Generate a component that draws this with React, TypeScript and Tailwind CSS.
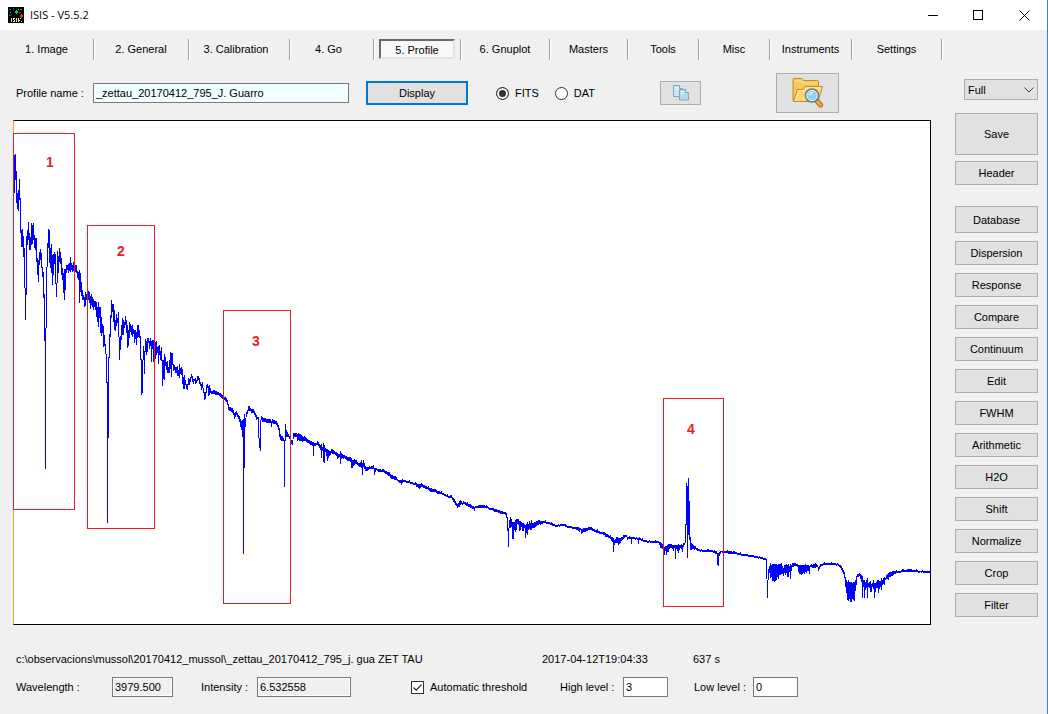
import { useState } from 'react'
import type { ReactNode } from 'react'

const TABS = [
  { label: '1. Image', cls: 'w-[94px] px-1.5' },
  { label: '2. General', cls: 'w-[95px] px-1.5' },
  { label: '3. Calibration', cls: 'w-[101px] pl-1 pr-2.5' },
  { label: '4. Go', cls: 'w-[84px] pl-1 pr-2.5' },
  { label: '5. Profile', cls: 'w-[87px] px-[5px]' },
  { label: '6. Gnuplot', cls: 'w-[89px] px-[5px]' },
  { label: 'Masters', cls: 'w-[78px] px-1.5' },
  { label: 'Tools', cls: 'w-[71px] px-1.5' },
  { label: 'Misc', cls: 'w-[71px] px-1.5' },
  { label: 'Instruments', cls: 'w-[82px] px-1.5' },
  { label: 'Settings', cls: 'w-[90px] px-1.5' },
]

const TOOLS = [
  'Dispersion', 'Response', 'Compare', 'Continuum', 'Edit', 'FWHM',
  'Arithmetic', 'H2O', 'Shift', 'Normalize', 'Crop', 'Filter',
]

// spectrum samples: column, top, bottom
const SPECTRUM = `
14,155,193 15,154,180 16,171,203 17,193,209 18,190,211 19,179,200 20,198,233 21,230,247 22,229,247 23,236,257
24,248,288 25,288,320 26,236,295 27,230,245 28,222,240 29,233,250 30,237,250 31,223,245 32,225,244 33,223,240
34,235,248 35,238,250 36,238,262 37,258,275 38,260,282 39,252,265 40,249,260 41,253,268 42,267,277 43,272,298
44,294,341 45,328,469 46,267,328 47,243,267 48,229,248 49,230,263 50,248,268 51,244,273 52,255,285 53,254,275
54,252,264 55,254,284 56,283,297 57,251,283 58,256,273 59,248,262 60,252,264 61,258,275 62,268,280 63,273,293
64,269,300 65,269,290 66,265,273 67,265,270 68,264,273 69,263,271 70,257,272 71,263,270 72,265,272 73,262,271
74,264,270 75,265,272 76,265,273 77,271,278 78,272,280 79,270,303 80,273,292 81,282,296 82,290,300 83,295,300
84,297,307 85,292,306 86,294,300 87,290,296 88,291,300 89,292,303 90,296,309 91,294,305 92,297,307 93,299,310
94,301,307 95,301,310 96,302,317 97,307,322 98,302,327 99,307,318 100,307,333 101,317,336 102,324,333 103,326,347
104,335,346 105,344,354 106,354,383 107,382,523 108,357,438 109,334,358 110,315,337 111,300,318 112,304,312
113,304,322 114,310,330 115,320,331 116,314,326 117,318,323 118,312,337 119,337,360 120,336,350 121,325,340
122,318,335 123,320,335 124,322,328 125,316,325 126,320,333 127,325,348 128,330,346 129,322,338 130,324,332
131,326,335 132,325,337 133,329,334 134,330,343 135,330,339 136,332,345 137,325,338 138,325,337 139,330,338
140,336,360 141,359,395 142,360,393 143,346,360 144,351,374 145,339,352 146,341,355 147,338,352 148,338,343
149,341,349 150,338,346 151,341,362 152,340,349 153,340,362 154,342,346 155,342,359 156,341,355 157,347,353
158,346,364 159,345,355 160,351,360 161,347,361 162,360,386 163,360,379 164,354,380 165,357,366 166,362,370
167,361,373 168,367,373 169,360,373 170,352,369 171,353,377 172,353,365 173,364,371 174,365,370 175,367,373
176,367,373 177,366,376 178,370,376 179,364,378 180,368,374 181,367,375 182,369,384 183,377,389 184,375,389
185,380,385 186,384,389 187,384,390 188,378,385 189,379,385 190,377,382 191,374,378 192,376,382 193,379,384
194,379,381 195,378,384 196,380,383 197,376,381 198,376,380 199,378,384 200,382,386 201,384,390 202,382,388
203,388,393 204,392,400 205,392,399 206,385,393 207,384,388 208,386,396 209,385,395 210,388,393 211,391,394
216,391,395 220,393,397 223,396,400 226,398,402 228,404,410 229,407,411 232,408,413 234,413,419 236,411,415
238,415,419 240,419,427 241,421,430 242,420,437 243,419,554 244,414,468 245,418,427 246,412,417 247,410,414
248,406,411 249,406,411 251,409,413 254,411,415 256,415,420 257,417,419 258,417,438 259,438,448 260,420,451
261,416,420 262,417,422 266,419,423 270,419,423 271,421,427 272,419,423 276,421,425 278,425,430 279,428,437
280,434,440 281,436,441 282,436,441 283,438,441 284,440,487 285,424,441 286,430,437 288,434,437 290,437,443
291,440,444 292,440,445 293,433,439 294,433,437 296,433,437 297,434,441 300,434,441 302,436,442 306,438,442
310,441,445 312,442,446 313,442,456 314,443,446 318,442,446 320,445,450 321,444,458 322,447,451 323,443,462
324,445,463 325,448,452 327,449,461 328,450,458 330,451,455 332,449,454 334,451,454 337,453,459 339,454,457
340,451,464 341,453,459 343,455,459 344,455,458 347,457,461 350,457,462 351,458,468 352,460,468 354,459,465
357,462,465 359,463,467 361,460,468 362,463,475 363,460,467 365,466,471 367,467,471 370,467,469 373,465,469
374,468,475 376,468,470 378,469,472 384,470,473 388,472,476 391,475,479 394,476,480 398,480,482 401,480,485
403,480,482 408,481,483 414,483,485 419,484,489 422,484,487 430,488,492 438,491,494 443,493,495 448,496,498
451,495,498 453,498,502 455,501,505 457,504,508 459,501,507 460,500,505 462,503,505 463,501,504 466,503,506
470,504,508 472,506,509 474,507,511 475,506,508 480,505,508 484,505,508 490,508,510 495,509,512 500,511,514
505,512,515 506,513,518 507,517,531 508,528,547 509,520,528 510,517,528 511,519,527 512,522,539 513,522,539
514,522,530 515,520,532 516,519,530 517,519,524 518,519,525 519,521,531 520,521,530 521,522,527 522,523,531
523,523,531 524,524,528 525,525,538 526,524,533 527,522,535 528,524,530 529,521,529 530,523,530 531,520,530
532,523,528 534,522,528 536,521,526 540,521,525 544,521,523 548,522,524 552,523,526 556,525,527 562,524,526
568,526,528 574,527,529 579,528,532 580,528,530 581,529,534 584,528,532 590,527,530 596,530,533 601,532,534
605,533,537 608,535,538 612,537,542 613,538,552 614,540,545 616,537,543 618,538,545 620,538,543 624,535,538
626,535,537 627,537,540 630,537,539 631,537,544 632,537,539 637,538,540 638,538,544 639,537,540 643,540,542
650,541,543 656,541,543 658,541,543 660,542,548 662,544,549 664,547,555 665,546,551 666,546,555 668,544,552
669,544,549 671,544,548 673,545,551 674,545,548 675,545,559 676,545,549 678,544,553 680,545,548 682,545,552
683,543,547 684,543,545 685,524,543 686,483,525 687,486,558 688,478,535 689,501,540 690,537,550 691,543,550
694,546,550 698,549,551 702,550,552 710,550,552 716,551,554 717,553,565 718,553,566 719,552,556 721,551,552
728,551,554 735,552,554 742,554,556 750,555,557 760,557,559 765,558,560 766,559,579 767,580,598 768,569,580
769,566,573 770,563,578 771,565,577 772,564,581 773,564,581 774,564,582 775,564,581 776,564,580 777,565,577
778,564,579 779,564,575 781,563,574 783,568,576 784,565,573 785,565,575 787,565,577 788,564,577 789,566,572
790,564,579 791,565,571 792,563,567 795,563,566 797,564,567 798,565,572 799,565,574 801,565,575 804,565,574
808,565,571 809,566,574 810,565,567 812,565,568 815,563,568 817,565,567 818,567,571 820,564,567 825,563,565
833,563,565 838,564,566 841,566,570 844,572,578 845,577,587 846,580,593 847,582,600 848,580,601 849,582,599
850,582,602 851,582,602 852,583,599 853,582,600 854,582,601 855,580,591 856,576,585 857,574,577 859,573,576
861,575,582 862,576,598 863,580,587 864,580,598 865,582,590 866,580,588 867,578,598 868,583,587 870,581,592
871,584,592 872,583,587 873,580,589 874,583,598 875,583,592 876,582,588 878,580,593 880,581,587 881,578,590
882,580,585 884,577,585 885,578,580 886,575,579 888,573,580 890,572,577 892,571,576 897,571,573 904,570,572
909,569,572 915,570,572 920,571,572 925,571,573 930,572,574`

// fills the columns between two samples, so that dense bands keep their ragged look
function buildTrace(src: string) {
  const pts = src.trim().split(/\s+/).map((s) => s.split(',').map(Number))
  let d = ''
  for (let i = 0; i < pts.length; i++) {
    const [x0, t0, b0] = pts[i]
    d += `M${x0} ${t0}h1V${b0}h-1z`
    if (i === pts.length - 1) break
    const [x1, t1, b1] = pts[i + 1]
    for (let x = x0 + 1; x < x1; x++) {
      const k = (x - x0) / (x1 - x0)
      const n = ((x * 7919) % 13) / 13
      const top = t0 + (t1 - t0) * k
      const bottom = b0 + (b1 - b0) * k
      const t = Math.round(top + (n > 0.7 ? -1 : 0))
      const b = Math.max(t + 2, Math.round(bottom - (bottom - top) * 0.25 * n))
      d += `M${x} ${t}h1V${b}h-1z`
    }
  }
  return d
}

const TRACE = buildTrace(SPECTRUM)

const REGIONS = [
  { n: 1, x: 13, y: 133, w: 61, h: 376, tx: 50, ty: 167 },
  { n: 2, x: 87, y: 225, w: 67, h: 303, tx: 121, ty: 256 },
  { n: 3, x: 223, y: 310, w: 67, h: 293, tx: 256, ty: 346 },
  { n: 4, x: 663, y: 398, w: 60, h: 208, tx: 691, ty: 434 },
]

function AppIcon() {
  return (
    <svg width="16" height="16" viewBox="0 0 16 16" shapeRendering="crispEdges" aria-hidden="true">
      <rect width="16" height="16" fill="#000" />
      <path d="M1 2h2v1H1zM5 1h1v2H5zM11 5h2v1h-2zM3 7h1v1H3zM1 8h2v1H1z" fill="#1f4fd0" />
      <path d="M7 4h3v2H7zM8 3h1v4H8zM12 2h2v1h-2z" fill="#10d040" />
      <path d="M12 8h3v2h-3zM13 7h1v4h-1z" fill="#f03018" />
      <path d="M2 5h1v1H2zM10 2h1v1h-1z" fill="#e8a020" />
      <path d="M3 11h1v4H3zM5 11h2v1H5zM5 12h1v1H5zM6 13h1v1H6zM5 14h2v1H5zM8 11h1v4H8zM10 11h1v4h-1zM12 11h1v1h-1zM11 13h1v1h-1zM13 14h1v1h-1z" fill="#e8e4b0" />
    </svg>
  )
}

function CopyIcon() {
  return (
    <svg width="18" height="18" viewBox="0 0 18 18" aria-hidden="true">
      <g stroke="#7aa9c4" strokeWidth="1">
        <path d="M1.5 1.5h6l2.500 2.500v8.500h-8.500z" fill="#c9e6f2" />
        <path d="M7.500 1.500v3h3" fill="#f2fbff" />
        <path d="M7.500 5.500h6l3 3v7.500h-9z" fill="#b4dbea" />
        <path d="M13.500 5.500v3h3" fill="#f2fbff" />
      </g>
      <path d="M3 3.500h3M3 5.500h3M9 7.500h3M9 9.500h3" stroke="#eefaff" />
    </svg>
  )
}

function FolderSearchIcon() {
  return (
    <svg width="32" height="32" viewBox="0 0 32 32" aria-hidden="true">
      <path d="M1 24V2.500q0-1 1-1h8l1.500 2h14q1 0 1 1V24z" fill="#f5c65a" stroke="#c9882a" />
      <path d="M2.500 4h7l1.500 2H25" fill="none" stroke="#fde6a0" />
      <path d="M1.500 24.500 5.500 12.500h5.500l2-3h17.500l-4.500 15z" fill="#fbd878" stroke="#c9882a" />
      <path d="M3.500 23l3.500-9.500h5l2-2.500H29" fill="none" stroke="#fff0bc" />
      <path d="M25 24l3.500 4" stroke="#b06a10" strokeWidth="5" strokeLinecap="round" />
      <path d="M25.500 24.500l3 3.500" stroke="#f5a93a" strokeWidth="3" strokeLinecap="round" />
      <circle cx="20" cy="18.500" r="6.500" fill="#8fd0f5" stroke="#687888" strokeWidth="1.500" />
      <circle cx="20" cy="18.500" r="5.200" fill="none" stroke="#e4f3fc" />
      <path d="M16.500 18.500a4 4 0 0 1 5-3.500c-1 2-2.500 3.500-5 3.500z" fill="#d6f0ff" />
    </svg>
  )
}

function PushButton({ className, label, children }: { className: string; label?: string; children: ReactNode }) {
  return (
    <button
      type="button"
      aria-label={label}
      className={`flex shrink-0 items-center justify-center bg-[#e1e1e1] ${className}`}
    >
      {children}
    </button>
  )
}

function Field({ label, labelCls, value, inputCls }: { label: string; labelCls: string; value: string; inputCls: string }) {
  return (
    <label className="flex shrink-0 items-center">
      <span className={`whitespace-nowrap ${labelCls}`}>{label}</span>
      <input type="text" defaultValue={value} className={`h-5 border border-[#7a7a7a] px-0.5 outline-none ${inputCls}`} />
    </label>
  )
}

function FormatRadio({ label, checked, onPick }: { label: string; checked: boolean; onPick: () => void }) {
  return (
    <label className="flex items-center gap-1.5">
      <input
        type="radio"
        name="format"
        checked={checked}
        onChange={onPick}
        className="size-[13px] appearance-none rounded-full border border-[#333] bg-white checked:bg-[#333] checked:shadow-[inset_0_0_0_2px_#fff]"
      />
      {label}
    </label>
  )
}

function SpectrumChart() {
  return (
    <div className="mt-[7px] border border-black border-l-[#e8a820] bg-white">
      <svg viewBox="14 121 916 503" className="block w-full overflow-visible" role="img" aria-label="Spectrum">
        <path d={TRACE} fill="#0000ff" shapeRendering="crispEdges" />
        {REGIONS.map((r) => (
          <g key={r.n}>
            <rect x={r.x + 0.5} y={r.y + 0.5} width={r.w} height={r.h} fill="none" stroke="#ed1c24" shapeRendering="crispEdges" />
            <text x={r.tx} y={r.ty} textAnchor="middle" className="fill-[#ed1c24] font-['Liberation_Sans',sans-serif] text-[14px] font-bold">
              {r.n}
            </text>
          </g>
        ))}
      </svg>
    </div>
  )
}

export default function App() {
  const [tab, setTab] = useState('5. Profile')
  const [format, setFormat] = useState('FITS')
  const [auto, setAuto] = useState(true)

  return (
    <div className="min-h-screen border-r border-[#3c82c8] bg-[#f0f0f0] font-['Liberation_Sans',Arial,sans-serif] text-[11px] leading-4 text-black">
      <header className="flex h-[30px] items-center bg-white pl-2">
        <AppIcon />
        <h1 className="ml-1.5 flex-1 font-['Open_Sans',sans-serif] text-[11px]">ISIS - V5.5.2</h1>
        <button type="button" aria-label="Minimize" className="flex h-full w-[45px] items-center justify-center">
          <svg width="11" height="11" stroke="#000" shapeRendering="crispEdges"><path d="M0 5.500h10" /></svg>
        </button>
        <button type="button" aria-label="Maximize" className="flex h-full w-[45px] items-center justify-center">
          <svg width="11" height="11" stroke="#000" fill="none" shapeRendering="crispEdges"><path d="M.5.5h9v9h-9z" /></svg>
        </button>
        <button type="button" aria-label="Close" className="flex h-full w-[46px] items-center justify-center">
          <svg width="11" height="11" stroke="#000"><path d="M.5.5l10 10M10.500.5l-10 10" /></svg>
        </button>
      </header>

      <nav className="flex pt-[9px]">
        {TABS.map((t) => (
          <div key={t.label} className={`h-[21px] shrink-0 border-r border-[#a0a0a0] shadow-[1px_0_0_#fff] ${t.cls}`}>
            <button
              type="button"
              onClick={() => setTab(t.label)}
              className={
                tab === t.label
                  ? 'h-5 w-full border-2 border-[#e3e3e3] border-t-[#696969] border-l-[#696969] bg-[#f8f8f8] pt-px leading-4'
                  : 'h-5 w-full whitespace-nowrap'
              }
            >
              {t.label}
            </button>
          </div>
        ))}
      </nav>

      <div className="flex gap-6 pt-[13px] pr-[9px] pl-[13px]">
        <main className="min-w-0 flex-1">
          <div className="flex h-10 items-center">
            <Field label="Profile name :" labelCls="w-20 pl-[3px]" value="_zettau_20170412_795_J. Guarro" inputCls="w-64 bg-[#f0ffff]" />
            <PushButton className="ml-[17px] h-6 w-[102px] border-2 border-[#0078d7]">Display</PushButton>
            <div className="ml-7 flex w-[164px] shrink-0 gap-4">
              <FormatRadio label="FITS" checked={format === 'FITS'} onPick={() => setFormat('FITS')} />
              <FormatRadio label="DAT" checked={format === 'DAT'} onPick={() => setFormat('DAT')} />
            </div>
            <PushButton label="Copy" className="h-6 w-[41px] border border-[#adadad]"><CopyIcon /></PushButton>
            <PushButton label="Browse" className="ml-[75px] h-10 w-[63px] border border-[#adadad]"><FolderSearchIcon /></PushButton>
          </div>

          <SpectrumChart />

          <div className="mt-[26px] flex pl-[3px] whitespace-nowrap">
            <p className="w-[526px]">c:\observacions\mussol\20170412_mussol\_zettau_20170412_795_j. gua ZET TAU</p>
            <p className="w-[151px]">2017-04-12T19:04:33</p>
            <p>637 s</p>
          </div>
          <div className="mt-2.5 flex items-center pl-[3px]">
            <Field label="Wavelength :" labelCls="w-24" value="3979.500" inputCls="w-[61px] shadow-[inset_0_0_0_1px_#fff]" />
            <div className="ml-7"><Field label="Intensity :" labelCls="w-14" value="6.532558" inputCls="w-[94px] shadow-[inset_0_0_0_1px_#fff]" /></div>
            <label className="ml-[60px] flex w-[149px] shrink-0 items-center gap-1.5 whitespace-nowrap">
              <span className="relative flex">
                <input
                  type="checkbox"
                  checked={auto}
                  onChange={(e) => setAuto(e.target.checked)}
                  className="size-[13px] appearance-none border border-[#333] bg-white"
                />
                {auto && (
                  <svg width="13" height="13" className="pointer-events-none absolute inset-0" fill="none" stroke="#222" strokeWidth="1.200">
                    <path d="M2.500 6.500l2.700 2.700 5.300-5.500" />
                  </svg>
                )}
              </span>
              Automatic threshold
            </label>
            <Field label="High level :" labelCls="w-[63px]" value="3" inputCls="w-[45px] bg-white" />
            <div className="ml-[26px]"><Field label="Low level :" labelCls="w-[59px]" value="0" inputCls="w-[45px] bg-white" /></div>
          </div>
        </main>

        <aside className="flex w-[83px] shrink-0 flex-col pt-1.5">
          <div className="relative ml-[9px]">
            <select aria-label="View" className="block h-[21px] w-full appearance-none border border-[#adadad] bg-[#e1e1e1] px-[3px]">
              <option>Full</option>
            </select>
            <svg width="10" height="6" className="pointer-events-none absolute top-2 right-1" fill="none" stroke="#444">
              <path d="M.5.5l4.500 4.500 4.500-4.500" />
            </svg>
          </div>
          <PushButton className="mt-[13px] h-[42px] border border-[#adadad]">Save</PushButton>
          <PushButton className="mt-1.5 h-6 border border-[#adadad]">Header</PushButton>
          <PushButton className="mt-[21px] mb-2 h-[27px] border border-[#adadad]">Database</PushButton>
          <div className="flex flex-col gap-2">
            {TOOLS.map((t) => (
              <PushButton key={t} className="h-6 border border-[#adadad]">{t}</PushButton>
            ))}
          </div>
        </aside>
      </div>
    </div>
  )
}
